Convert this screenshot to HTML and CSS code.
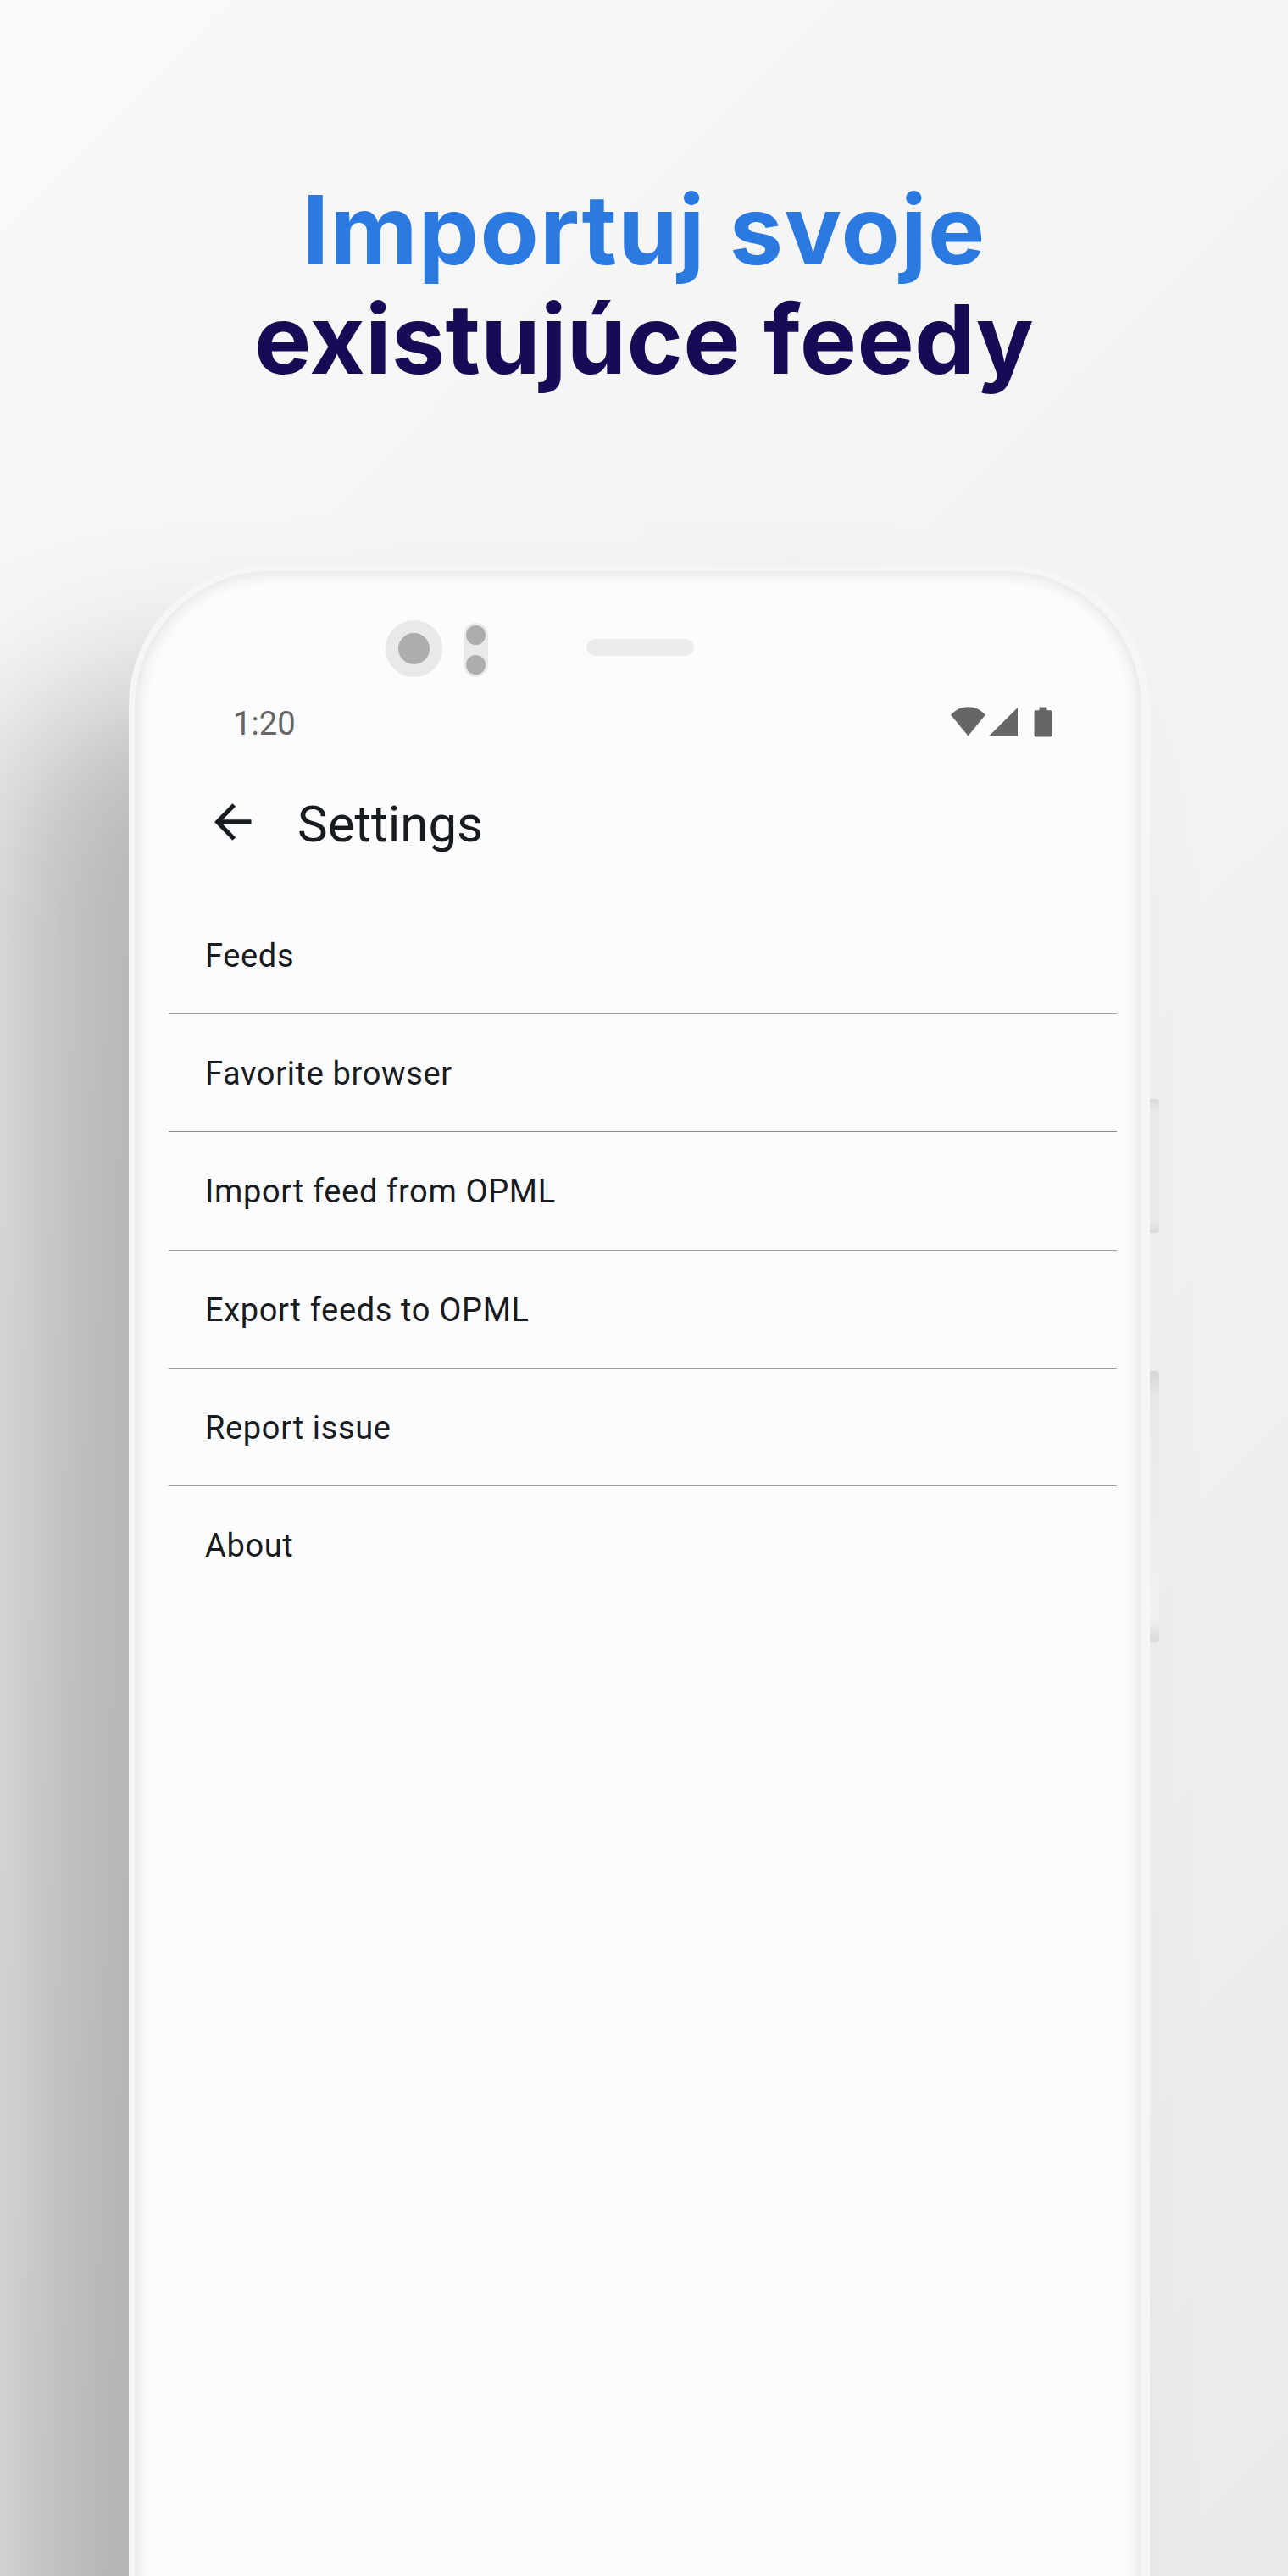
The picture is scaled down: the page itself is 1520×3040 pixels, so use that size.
FILE: index.html
```html
<!DOCTYPE html>
<html lang="sk">
<head>
<meta charset="utf-8">
<title>Importuj svoje existujúce feedy</title>
<link rel="stylesheet" href="styles.css">
</head>
<body>
<main class="poster">
  <h1 class="headline">
    <span class="headline-top">Importuj svoje</span>
    <span class="headline-bottom">existujúce feedy</span>
  </h1>
  <section class="phone">
    <div class="side-button power"></div>
    <div class="side-button volume"></div>
    <div class="body">
      <div class="sensors">
        <div class="camera"></div>
        <div class="sensor-pair"><i></i><i></i></div>
        <div class="speaker"></div>
      </div>
      <div class="screen">
        <div class="status-bar">
          <span class="clock">1:20</span>
          <svg class="status-icons" width="120" height="36" viewBox="0 0 120 36" fill="#666">
            <path d="M0 9.5Q9 0.3 20.5 0.3T41 9.5L20.5 34.5Z"/>
            <path d="M45 34.8L79 1V34.8Z"/>
            <path d="M104.500 0.500h9v3.700h4q2 0 2 2V33.500q0 2-2 2H100.500q-2 0-2-2V6.200q0-2 2-2h4Z"/>
          </svg>
        </div>
        <header class="app-bar">
          <svg class="back" width="44" height="44" viewBox="0 0 44 44" fill="none" stroke="#191c1e" stroke-width="5.300">
            <path d="M43.500 22H4M23.300 2L3.700 22L23.300 42"/>
          </svg>
          <h2 class="title">Settings</h2>
        </header>
        <ul class="settings">
          <li>Feeds</li>
          <li>Favorite browser</li>
          <li>Import feed from OPML</li>
          <li>Export feeds to OPML</li>
          <li>Report issue</li>
          <li>About</li>
        </ul>
      </div>
    </div>
  </section>
</main>
</body>
</html>
```
FILE: styles.css
```css
* { box-sizing: border-box; }
body { margin: 0; }
.poster {
  width: 1520px;
  height: 3040px;
  overflow: hidden;
  padding-top: 207px;
  background: linear-gradient(135deg, #f9f9f9 0%, #f4f4f3 35%, #f0f0ef 65%, #ebeae9 100%);
}
.headline {
  display: flex;
  flex-direction: column;
  align-items: center;
  height: 461px;
  margin: 0;
  font: 650 113px/129px Inter, sans-serif;
  white-space: nowrap;
}
.headline-top {
  color: #2b7ae2;
  letter-spacing: 1.300px;
}
.headline-bottom {
  color: #160c56;
  letter-spacing: 0.300px;
}
.phone {
  position: relative;
  width: 1205px;
  height: 2900px;
  margin-left: 152px;
  padding: 6px 10px 0 7px;
  border-radius: 165px;
  background: #f6f6f6;
  box-shadow: -150px 150px 195px rgba(0, 0, 0, 0.26);
}
.body {
  height: 2880px;
  padding: 0 29px 0 40px;
  border-radius: 160px;
  background: #fcfcfc;
  box-shadow: inset 0 0 20px 1px rgba(0, 0, 0, 0.13);
}
.side-button {
  position: absolute;
  left: 1205px;
  width: 11px;
  border-radius: 0 4px 4px 0;
}
.power {
  top: 629px;
  height: 158px;
  background: linear-gradient(#dadada, #e9e9e9 16px, #e9e9e9 142px, #dadada);
}
.volume {
  top: 950px;
  height: 320px;
  background: linear-gradient(#d8d8d8, #e8e8e8 34px, #f1f1f1 290px, #dadada);
}
.sensors {
  display: flex;
  align-items: flex-start;
  height: 147px;
  padding: 58px 0 0 256px;
}
.camera {
  width: 67px;
  height: 67px;
  border: 15.500px solid #e9e9e9;
  border-radius: 50%;
  background: #adadad;
}
.sensor-pair {
  display: flex;
  flex-direction: column;
  justify-content: space-between;
  width: 29px;
  height: 64px;
  margin: 3px 0 0 25px;
  padding: 3px;
  border-radius: 15px;
  background: #e9e9e9;
}
.sensor-pair i {
  width: 23px;
  height: 23px;
  border-radius: 50%;
  background: #adadad;
}
.speaker {
  width: 127px;
  height: 20px;
  margin: 21.500px 0 0 116px;
  border-radius: 10px;
  background: #ececec;
}
.screen {
  height: 2700px;
  border-radius: 105px 105px 0 0;
  background: #fcfcfe;
  font-family: Roboto, sans-serif;
  color: #191c1e;
}
.status-bar {
  display: flex;
  justify-content: space-between;
  align-items: flex-start;
  height: 99px;
  padding: 13px 76px 0 76px;
}
.clock {
  font-size: 38.200px;
  line-height: 40px;
  color: #666;
}
.app-bar {
  display: flex;
  align-items: flex-start;
  height: 138px;
  padding: 28px 0 0 54px;
}
.title {
  margin: -9px 0 0 54px;
  font-size: 60px;
  font-weight: 400;
  line-height: 68px;
}
.settings {
  margin: 0;
  padding: 0;
  list-style: none;
}
.settings li {
  height: 139.200px;
  padding: 47px 0 0 43px;
  border-bottom: 1px solid #a2a2a4;
  font-size: 38px;
  line-height: 46px;
  letter-spacing: 0.650px;
}
.settings li:nth-child(2) { border-color: #89898b; }
.settings li:last-child { border: 0; }
```
